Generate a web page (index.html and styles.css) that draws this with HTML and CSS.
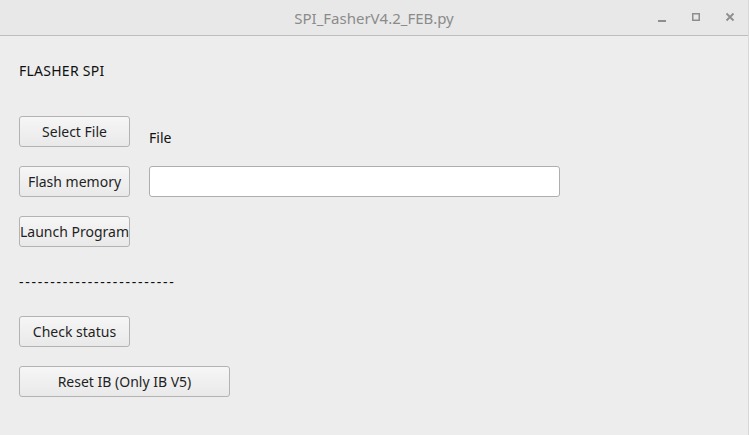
FILE: index.html
```html
<!DOCTYPE html>
<html>
<head>
<meta charset="utf-8">
<link rel="stylesheet" href="styles.css">
</head>
<body>
<div class="window">
  <header class="titlebar">
    <div class="title">SPI_FasherV4.2_FEB.py</div>
    <div class="controls">
      <svg class="ctl" width="12" height="12" viewBox="0 0 12 12"><rect x="2" y="9" width="8" height="2" fill="#8e8e8e"/></svg>
      <svg class="ctl" width="12" height="12" viewBox="0 0 12 12"><rect x="2.75" y="2.75" width="6.5" height="6.5" fill="none" stroke="#8e8e8e" stroke-width="1.5"/></svg>
      <svg class="ctl" width="12" height="12" viewBox="0 0 12 12"><path d="M2.5 2.5 L9.5 9.5 M9.5 2.5 L2.5 9.5" stroke="#8e8e8e" stroke-width="1.8"/></svg>
    </div>
  </header>
  <main class="content">
    <div class="heading">FLASHER SPI</div>
    <div class="rows">
      <div class="row">
        <button class="btn">Select File</button>
        <span class="file-label">File</span>
      </div>
      <div class="row">
        <button class="btn">Flash memory</button>
        <input class="entry" type="text">
      </div>
      <div class="row">
        <button class="btn tight">Launch Program</button>
      </div>
      <div class="row">
        <span class="dashes">-------------------------</span>
      </div>
      <div class="row">
        <button class="btn">Check status</button>
      </div>
      <div class="row">
        <button class="btn wide">Reset IB (Only IB V5)</button>
      </div>
    </div>
  </main>
</div>
</body>
</html>
```

FILE: styles.css
```css
html, body {
  margin: 0;
  padding: 0;
  height: 100%;
  background: #ededed;
}
body {
  font-family: "Noto Sans", "DejaVu Sans", sans-serif;
  font-size: 14px;
  color: #2e3436;
}
.window {
  height: 435px;
  box-sizing: border-box;
  border-right: 1px solid #d8d8d8;
  display: flex;
  flex-direction: column;
}
.titlebar {
  height: 35px;
  flex: none;
  background: #e8e8e8;
  border-bottom: 1px solid #bdbdbd;
  display: flex;
  align-items: center;
  justify-content: center;
  position: relative;
}
.title {
  font-size: 15px;
  color: #8b8b8b;
  padding-top: 1px;
}
.controls {
  position: absolute;
  right: 12px;
  top: 11px;
  display: flex;
  gap: 22px;
}
.ctl { display: block; }
.content {
  padding: 20px 19px 0 19px;
}
.heading {
  height: 30px;
  line-height: 30px;
  color: #101010;
  letter-spacing: 0.25px;
}
.rows {
  margin-top: 30px;
  display: flex;
  flex-direction: column;
  gap: 19px;
}
.row {
  height: 31px;
  display: flex;
  align-items: center;
  gap: 19px;
}
.btn {
  width: 111px;
  height: 31px;
  box-sizing: border-box;
  border: 1px solid #b3b3b3;
  border-radius: 3px;
  background: linear-gradient(#f6f6f6, #e9e9e9);
  font-family: inherit;
  font-size: 14px;
  color: #1f1f1f;
  padding: 0;
  white-space: nowrap;
}
.btn.wide { width: 211px; }
.file-label {
  color: #101010;
  padding-top: 11px;
}
.entry {
  width: 411px;
  height: 31px;
  box-sizing: border-box;
  border: 1px solid #aeaeae;
  border-radius: 3px;
  background: #ffffff;
  margin: 0;
  padding: 0 6px;
  font-family: inherit;
  font-size: 14px;
}
.dashes {
  color: #101010;
  letter-spacing: 1.75px;
  padding-top: 0;
}
```
